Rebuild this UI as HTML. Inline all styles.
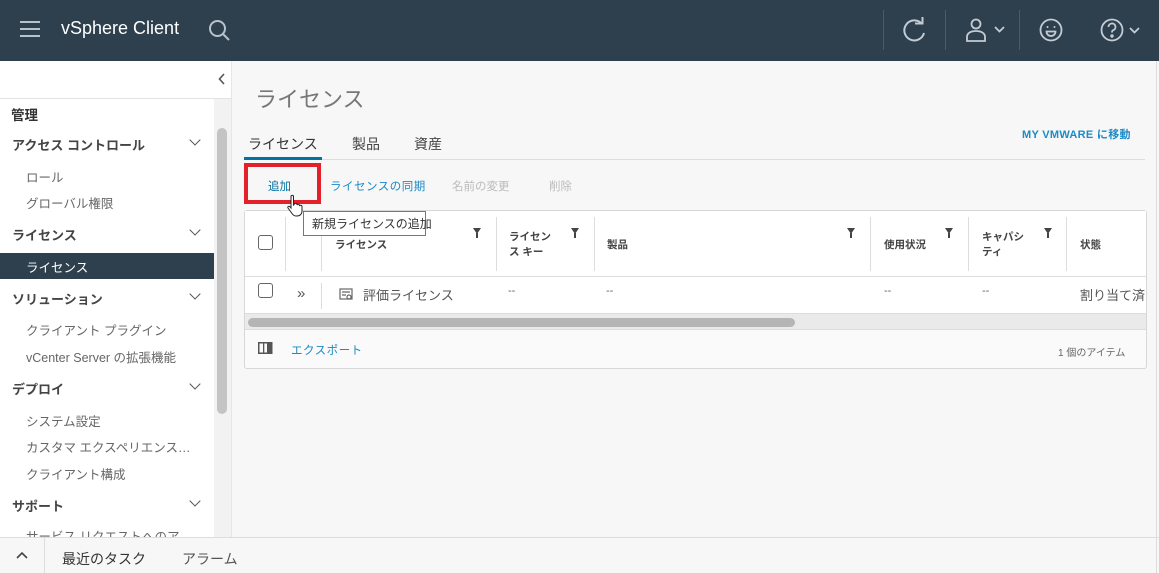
<!DOCTYPE html>
<html><head><meta charset="utf-8"><style>
*{box-sizing:border-box;margin:0;padding:0}
body{width:1159px;height:573px;overflow:hidden;background:#f7f7f7;font-family:"Liberation Sans","Noto Sans CJK JP",sans-serif;position:relative;color:#333}
.a{position:absolute;white-space:nowrap}
#hd{position:absolute;left:0;top:0;width:1159px;height:61px;background:#2e3f4e}
#sb{position:absolute;left:0;top:61px;width:214px;height:476px;background:#fff}
.sec{font-size:13px;font-weight:bold;color:#444;left:12px}
.it{font-size:12.5px;color:#666;left:26px}
.chev{position:absolute;left:191px;width:8px;height:8px;border-right:1.5px solid #555;border-bottom:1.5px solid #555;transform:rotate(45deg)}
.vl{position:absolute;width:1px;background:#ddd}
.th{font-size:10.5px;font-weight:bold;color:#444}
.flt{position:absolute;width:0;height:0;border-left:4.5px solid transparent;border-right:4.5px solid transparent;border-top:6px solid #444}
.flt:after{content:"";position:absolute;left:-1px;top:-1px;width:2px;height:5px;background:#444}
.hi{position:absolute;width:1px;background:#4a5b6a;top:10px;height:40px}
</style></head><body>
<div id="hd">
 <div class="a" style="left:20px;top:21px;width:20px;height:2px;background:#b8c2ca;box-shadow:0 7px 0 #b8c2ca,0 14px 0 #b8c2ca"></div>
 <div class="a" style="left:61px;top:18px;font-size:18px;color:#fff">vSphere Client</div>
 <svg class="a" style="left:208px;top:19px" width="24" height="24" viewBox="0 0 24 24" fill="none" stroke="#b8c2ca" stroke-width="2"><circle cx="9.5" cy="9.5" r="7.5"/><path d="M15 15l6 6"/></svg>
 <div class="hi" style="left:883px"></div><div class="hi" style="left:945px"></div><div class="hi" style="left:1019px"></div>
 <svg class="a" style="left:900px;top:16px" width="28" height="28" viewBox="0 0 28 28" fill="none" stroke="#c4ccd3" stroke-width="2"><path d="M22 8A10 10 0 1 0 24 17"/><path d="M15 7.5h7.5V1"/></svg>
 <svg class="a" style="left:965px;top:17px" width="46" height="26" viewBox="0 0 46 26" fill="none" stroke="#c4ccd3" stroke-width="1.8"><circle cx="11" cy="7" r="4.5"/><path d="M2 24v-4c0-4 4-6 9-6s9 2 9 6v4z"/><path d="M30 10l4.5 4.5L39 10"/></svg>
 <svg class="a" style="left:1039px;top:18px" width="24" height="24" viewBox="0 0 24 24" fill="none" stroke="#c4ccd3" stroke-width="1.8"><circle cx="12" cy="12" r="10.5"/><circle cx="8.5" cy="9" r="1" fill="#c4ccd3" stroke="none"/><circle cx="15.5" cy="9" r="1" fill="#c4ccd3" stroke="none"/><path d="M7.5 13.5h9a4.5 4.5 0 0 1-9 0z"/></svg>
 <svg class="a" style="left:1100px;top:18px" width="46" height="26" viewBox="0 0 46 26" fill="none" stroke="#c4ccd3" stroke-width="1.8"><circle cx="12" cy="12" r="10.5"/><path d="M8.5 9a3.5 3.5 0 1 1 4.5 3.3c-1 .4-1 1-1 2.2"/><circle cx="12" cy="18" r=".8" fill="#c4ccd3"/><path d="M30 10l4.5 4.5L39 10"/></svg>
</div>
<div id="sb"></div>
<div class="a" style="left:0;top:98px;width:231px;height:1px;background:#e3e3e3"></div>
<div class="a" style="left:214px;top:99px;width:18px;height:438px;background:#f2f2f2"></div>
<div class="a" style="left:214px;top:61px;width:18px;height:37px;background:#fff"></div>
<svg class="a" style="left:218px;top:73px" width="8" height="12" viewBox="0 0 8 12" fill="none" stroke="#555" stroke-width="1.6"><path d="M6 1L1.5 6 6 11"/></svg>
<div class="a" style="left:217px;top:128px;width:10px;height:286px;background:#c4c4c4;border-radius:5px"></div>
<div class="a" style="left:231px;top:61px;width:1px;height:476px;background:#e6e6e6"></div>
<div class="a sec" style="left:11px;top:104px;font-size:13.5px;color:#333">管理</div>
<div class="a sec" style="top:135px">アクセス コントロール</div><div class="chev" style="top:136px"></div>
<div class="a it" style="top:167px">ロール</div>
<div class="a it" style="top:193px">グローバル権限</div>
<div class="a sec" style="top:225px">ライセンス</div><div class="chev" style="top:226px"></div>
<div class="a" style="left:0;top:253px;width:214px;height:26px;background:#2e3f4e"></div>
<div class="a it" style="top:257px;color:#fff">ライセンス</div>
<div class="a sec" style="top:289px">ソリューション</div><div class="chev" style="top:290px"></div>
<div class="a it" style="top:320px">クライアント プラグイン</div>
<div class="a it" style="top:347px">vCenter Server の拡張機能</div>
<div class="a sec" style="top:379px">デプロイ</div><div class="chev" style="top:380px"></div>
<div class="a it" style="top:411px">システム設定</div>
<div class="a it" style="top:437px">カスタマ エクスペリエンス…</div>
<div class="a it" style="top:464px">クライアント構成</div>
<div class="a sec" style="top:496px">サポート</div><div class="chev" style="top:497px"></div>
<div class="a it" style="top:526px">サービス リクエストへのア</div>
<div class="a" style="left:0;top:537px;width:1159px;height:36px;background:#f7f7f7;border-top:1px solid #ddd"></div>
<svg class="a" style="left:16px;top:551px" width="12" height="8" viewBox="0 0 12 8" fill="none" stroke="#444" stroke-width="1.6"><path d="M1 7l5-5 5 5"/></svg>
<div class="a" style="left:44px;top:538px;width:1px;height:35px;background:#ddd"></div>
<div class="a" style="left:62px;top:549px;font-size:14px;color:#333">最近のタスク</div>
<div class="a" style="left:182px;top:549px;font-size:14px;color:#555">アラーム</div>
<div class="a" style="left:1156px;top:61px;width:1px;height:512px;background:#ddd"></div>

<div class="a" style="left:255px;top:82px;font-size:22px;color:#777">ライセンス</div>
<div class="a" style="left:248px;top:134px;font-size:14px;color:#333">ライセンス</div>
<div class="a" style="left:352px;top:134px;font-size:14px;color:#444">製品</div>
<div class="a" style="left:414px;top:134px;font-size:14px;color:#444">資産</div>
<div class="a" style="left:244px;top:159px;width:901px;height:1px;background:#ddd"></div>
<div class="a" style="left:244px;top:157px;width:78px;height:3px;background:#0072a3"></div>
<div class="a" style="left:1022px;top:126px;font-size:11px;font-weight:bold;color:#1b8ac6;letter-spacing:.3px">MY VMWARE に移動</div>
<div class="a" style="left:268px;top:178px;font-size:11.5px;color:#0072a3">追加</div>
<div class="a" style="left:330px;top:178px;font-size:11.5px;color:#1b8ac6;letter-spacing:.5px">ライセンスの同期</div>
<div class="a" style="left:452px;top:178px;font-size:11.5px;color:#bbb">名前の変更</div>
<div class="a" style="left:549px;top:178px;font-size:11.5px;color:#bbb">削除</div>

<div class="a" style="left:244px;top:210px;width:903px;height:159px;border:1px solid #d7d7d7;border-radius:3px;background:#fafafa"></div>
<div class="a" style="left:245px;top:211px;width:901px;height:102px;background:#fff"></div>
<div class="a" style="left:245px;top:276px;width:901px;height:1px;background:#ddd"></div>
<div class="a" style="left:245px;top:313px;width:901px;height:17px;background:#eaeaea;border-top:1px solid #ddd;border-bottom:1px solid #ddd"></div>
<div class="a" style="left:248px;top:318px;width:547px;height:9px;background:#b5b5b5;border-radius:5px"></div>
<div class="vl" style="left:285px;top:217px;height:54px"></div>
<div class="vl" style="left:321px;top:217px;height:54px"></div>
<div class="vl" style="left:496px;top:217px;height:54px"></div>
<div class="vl" style="left:594px;top:217px;height:54px"></div>
<div class="vl" style="left:870px;top:217px;height:54px"></div>
<div class="vl" style="left:968px;top:217px;height:54px"></div>
<div class="vl" style="left:1066px;top:217px;height:54px"></div>
<div class="vl" style="left:321px;top:283px;height:26px"></div>
<div class="a" style="left:258px;top:235px;width:15px;height:15px;border:1.5px solid #666;border-radius:3px;background:#fff"></div>
<div class="a" style="left:258px;top:283px;width:15px;height:15px;border:1.5px solid #666;border-radius:3px;background:#fff"></div>
<div class="a th" style="left:335px;top:237px">ライセンス</div>
<div class="flt" style="left:473px;top:228px"></div>
<div class="a th" style="left:509px;top:230px;line-height:15px">ライセン<br>ス キー</div>
<div class="flt" style="left:571px;top:228px"></div>
<div class="a th" style="left:607px;top:237px">製品</div>
<div class="flt" style="left:847px;top:228px"></div>
<div class="a th" style="left:884px;top:237px">使用状況</div>
<div class="flt" style="left:945px;top:228px"></div>
<div class="a th" style="left:982px;top:230px;line-height:15px">キャパシ<br>ティ</div>
<div class="flt" style="left:1044px;top:228px"></div>
<div class="a th" style="left:1080px;top:237px">状態</div>
<div class="a" style="left:297px;top:285px;font-size:15px;color:#555">»</div>
<svg class="a" style="left:339px;top:288px" width="15" height="14" viewBox="0 0 15 14" fill="none" stroke="#666" stroke-width="1.2"><rect x="1" y="1" width="12" height="10"/><path d="M3 4h8M3 7h4"/><circle cx="10" cy="9" r="2"/></svg>
<div class="a" style="left:363px;top:285px;font-size:13px;color:#555">評価ライセンス</div>
<div class="a" style="left:508px;top:285px;font-size:11px;color:#666">--</div>
<div class="a" style="left:606px;top:285px;font-size:11px;color:#666">--</div>
<div class="a" style="left:884px;top:285px;font-size:11px;color:#666">--</div>
<div class="a" style="left:982px;top:285px;font-size:11px;color:#666">--</div>
<div class="a" style="left:1080px;top:285px;font-size:13px;color:#555;width:66px;overflow:hidden">割り当て済み</div>
<svg class="a" style="left:258px;top:342px" width="15" height="12" viewBox="0 0 15 12"><rect x=".75" y=".75" width="13" height="10.5" fill="none" stroke="#555" stroke-width="1.5"/><rect x="5" y="1" width="1.3" height="10" fill="#555"/><rect x="9" y="1" width="5" height="10" fill="#555"/></svg>
<div class="a" style="left:291px;top:342px;font-size:11.5px;color:#1b8ac6;letter-spacing:.5px">エクスポート</div>
<div class="a" style="left:1058px;top:344px;font-size:10px;color:#666">1 個のアイテム</div>

<div class="a" style="left:244px;top:163px;width:77px;height:41px;border:4px solid #e4202a"></div>
<div class="a" style="left:303px;top:211px;width:123px;height:25px;border:1px solid #777;background:#fff;font-size:12px;color:#333;padding:3px 0 0 8px">新規ライセンスの追加</div>
<svg class="a" style="left:286px;top:194px" width="20" height="24" viewBox="0 0 20 24"><path d="M5 2.5c0-1.5 2.5-1.5 2.5 0V11l1-1c.5-1 2.5-1 2.5.5v.5c.5-1 2.5-1 2.5.5v.5c.5-1 2.5-1 2.5.5V17c0 3-2 5-5 5H10c-2 0-3-1-4-2.5L2 14c-.8-1.2.8-2.4 2-1.2L5 14z" fill="#fff" stroke="#222" stroke-width="1"/></svg>
</body></html>
